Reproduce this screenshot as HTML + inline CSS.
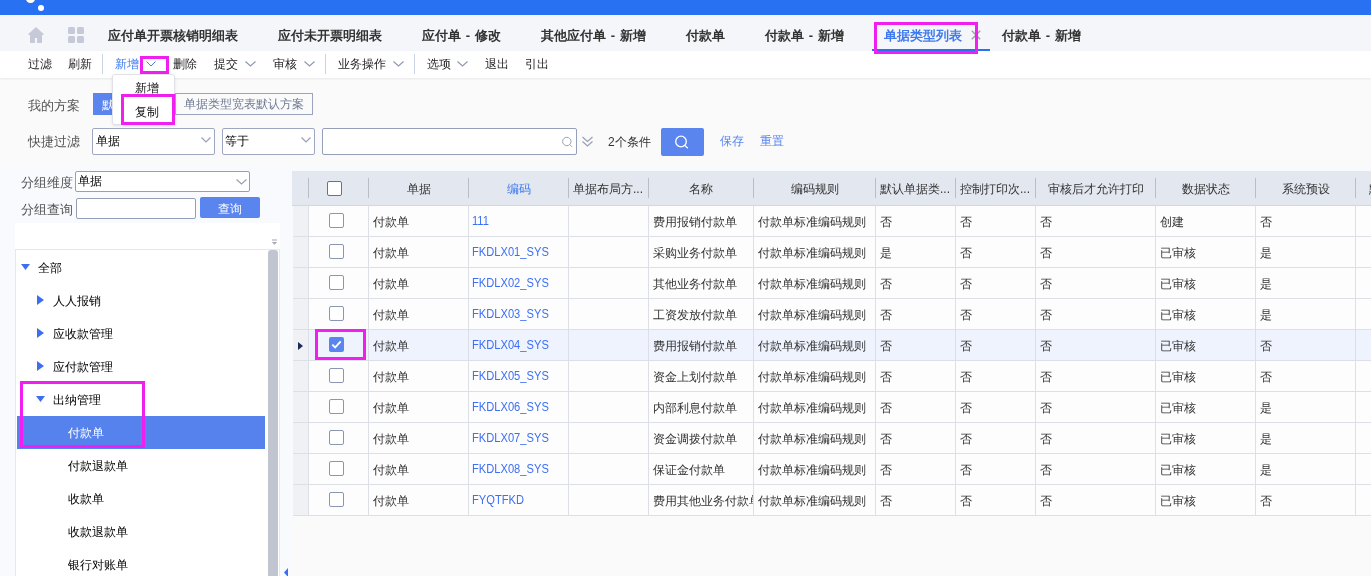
<!DOCTYPE html>
<html><head><meta charset="utf-8">
<style>
*{box-sizing:border-box;margin:0;padding:0}
html,body{width:1371px;height:576px;overflow:hidden;background:#fafafa;font-family:"Liberation Sans",sans-serif;font-size:12px;color:#333}
body{position:relative}
#wrap{position:absolute;left:0;top:0;width:1371px;height:576px;will-change:transform}
.a{position:absolute;white-space:nowrap}
#topbar{left:0;top:0;width:1371px;height:15px;background:#2871f2}
#tabs{left:0;top:15px;width:1371px;height:36px;background:#f5f6fa}
.tab{position:absolute;top:13px;font-size:13px;font-weight:bold;color:#333;line-height:16px;white-space:nowrap}
#toolbar{left:0;top:51px;width:1371px;height:27px;background:#fff;box-shadow:0 1px 2px rgba(0,0,0,0.08)}
.tb{position:absolute;top:5px;font-size:12.4px;color:#1f1f1f;line-height:16px;white-space:nowrap}
.sep{position:absolute;top:3px;width:1px;height:20px;background:#cbd2e6}
.chev{position:absolute;top:10px}
.mag{position:absolute;border:3px solid #f01ff0}
.hd{top:181px;line-height:16px;color:#333}
.cell{line-height:30px;padding-top:1px;color:#333}
.lat{font-size:12.6px;padding-top:0 !important;transform:scaleX(0.885);transform-origin:0 0}
.lbl{color:#555;line-height:16px;font-size:12.8px}
.tr{line-height:16px;font-size:12.3px;color:#000;margin-top:1px}
</style></head><body><div id="wrap">
<div class="a" id="topbar"></div>
<div class="a" style="left:26px;top:-6px;width:8.5px;height:8.5px;border-radius:50%;background:#fff"></div>
<div class="a" style="left:37.8px;top:5.1px;width:5.8px;height:5.8px;border-radius:50%;background:#fff"></div>

<div class="a" id="tabs">
 <svg style="position:absolute;left:28px;top:12px" width="16" height="16" viewBox="0 0 16 16"><path d="M8 0 L15.6 7 Q16 8 15 8 L14 8 L14 16 L9.1 16 L9.1 11 L6.9 11 L6.9 16 L2 16 L2 8 L1 8 Q0 8 0.4 7 Z" fill="#c5c9d8"/></svg>
 <svg style="position:absolute;left:68px;top:12px" width="16" height="16" viewBox="0 0 16 16"><rect x="0" y="0" width="7" height="7" rx="1.5" fill="#c5c9d8"/><rect x="9" y="0" width="7" height="7" rx="1.5" fill="#c5c9d8"/><rect x="0" y="9" width="7" height="7" rx="1.5" fill="#c5c9d8"/><rect x="9" y="9" width="7" height="7" rx="1.5" fill="#c5c9d8"/></svg>
 <div class="tab" style="left:108px">应付单开票核销明细表</div>
 <div class="tab" style="left:278px">应付未开票明细表</div>
 <div class="tab" style="left:422px">应付单<span style="padding:0 1.2px"> - </span>修改</div>
 <div class="tab" style="left:541px">其他应付单<span style="padding:0 1.2px"> - </span>新增</div>
 <div class="tab" style="left:686px">付款单</div>
 <div class="tab" style="left:765px">付款单<span style="padding:0 1.2px"> - </span>新增</div>
 <div class="tab" style="left:884px;color:#3f7af0">单据类型列表</div>
 <svg style="position:absolute;left:971px;top:15px" width="10" height="10" viewBox="0 0 10 10"><path d="M0.8 0.8 L9.2 9.2 M9.2 0.8 L0.8 9.2" stroke="#9aa0ad" stroke-width="1.4"/></svg>
 <div style="position:absolute;left:872px;top:34px;width:118px;height:2px;background:#2871f2"></div>
 <div class="tab" style="left:1002px">付款单<span style="padding:0 1.2px"> - </span>新增</div>
</div>

<div class="a" id="toolbar">
 <div class="tb" style="left:28px">过滤</div>
 <div class="tb" style="left:68px">刷新</div>
 <div class="sep" style="left:102px"></div>
 <div class="tb" style="left:115px;color:#3f7af0">新增</div>
 <svg class="chev" style="left:146px" width="10" height="6" viewBox="0 0 10 6"><path d="M0.5 0.5 L5 5 L9.5 0.5" stroke="#3f7af0" fill="none" stroke-width="1"/></svg>
 <div class="tb" style="left:173px">删除</div>
 <div class="tb" style="left:214px">提交</div>
 <svg class="chev" style="left:245px" width="11" height="6" viewBox="0 0 11 6"><path d="M0.5 0.5 L5.5 5 L10.5 0.5" stroke="#8d97b3" fill="none" stroke-width="1.1"/></svg>
 <div class="tb" style="left:273px">审核</div>
 <svg class="chev" style="left:304px" width="11" height="6" viewBox="0 0 11 6"><path d="M0.5 0.5 L5.5 5 L10.5 0.5" stroke="#8d97b3" fill="none" stroke-width="1.1"/></svg>
 <div class="sep" style="left:325px"></div>
 <div class="tb" style="left:338px">业务操作</div>
 <svg class="chev" style="left:393px" width="11" height="6" viewBox="0 0 11 6"><path d="M0.5 0.5 L5.5 5 L10.5 0.5" stroke="#8d97b3" fill="none" stroke-width="1.1"/></svg>
 <div class="sep" style="left:414px"></div>
 <div class="tb" style="left:427px">选项</div>
 <svg class="chev" style="left:457px" width="11" height="6" viewBox="0 0 11 6"><path d="M0.5 0.5 L5.5 5 L10.5 0.5" stroke="#8d97b3" fill="none" stroke-width="1.1"/></svg>
 <div class="tb" style="left:485px">退出</div>
 <div class="tb" style="left:525px">引出</div>
</div>

<!-- filter area -->
<div class="a lbl" style="left:28px;top:98px">我的方案</div>
<div class="a" style="left:93px;top:93px;width:40px;height:22px;background:#5a84ee"></div>
<div class="a" style="left:102px;top:97px;color:#fff;line-height:16px">默认</div>
<div class="a" style="left:175px;top:93px;width:138px;height:22px;border:1px solid #9aa4be"></div>
<div class="a" style="left:184px;top:96px;color:#6d7892;line-height:16px">单据类型宽表默认方案</div>

<div class="a lbl" style="left:28px;top:134px">快捷过滤</div>
<div class="a" style="left:92px;top:128px;width:123px;height:27px;border:1px solid #9ea7bf;border-radius:2px;background:#fff"></div>
<div class="a" style="left:96px;top:133px;color:#000;line-height:16px">单据</div>
<svg class="a" style="left:201px;top:137px" width="10" height="6" viewBox="0 0 10 6"><path d="M0.5 0.5 L5 5 L9.5 0.5" stroke="#98a0b4" fill="none" stroke-width="1.2"/></svg>
<div class="a" style="left:222px;top:128px;width:93px;height:27px;border:1px solid #9ea7bf;border-radius:2px;background:#fff"></div>
<div class="a" style="left:225px;top:133px;color:#000;line-height:16px">等于</div>
<svg class="a" style="left:301px;top:137px" width="10" height="6" viewBox="0 0 10 6"><path d="M0.5 0.5 L5 5 L9.5 0.5" stroke="#98a0b4" fill="none" stroke-width="1.2"/></svg>
<div class="a" style="left:322px;top:128px;width:255px;height:27px;border:1px solid #969fb8;border-radius:2px;background:#fff"></div>
<svg class="a" style="left:561px;top:136px" width="13" height="12" viewBox="0 0 13 12"><circle cx="5.8" cy="5.5" r="4.2" stroke="#9ba2b3" fill="none" stroke-width="1"/><path d="M8.9 8.6 L11 10.8" stroke="#9ba2b3" stroke-width="1"/></svg>
<svg class="a" style="left:582px;top:136px" width="11" height="11" viewBox="0 0 11 11"><path d="M0.5 1 L5.5 5.5 L10.5 1 M0.5 5.5 L5.5 10 L10.5 5.5" stroke="#98a0b4" fill="none" stroke-width="1.2"/></svg>
<div class="a" style="left:608px;top:134px;color:#333;line-height:16px">2个条件</div>
<div class="a" style="left:661px;top:128px;width:43px;height:28px;background:#5a84ee;border-radius:2px"></div>
<svg class="a" style="left:674px;top:135px" width="16" height="15" viewBox="0 0 16 15"><circle cx="7" cy="6.5" r="5.3" stroke="#fff" fill="none" stroke-width="1.3"/><path d="M10.8 10.4 L13.8 13.3" stroke="#fff" stroke-width="1.3"/></svg>
<div class="a" style="left:720px;top:133px;color:#5a84ee;line-height:16px">保存</div>
<div class="a" style="left:760px;top:133px;color:#5a84ee;line-height:16px">重置</div>

<!-- left panel -->
<div class="a" style="left:0;top:166px;width:1371px;height:410px;background:#f9fafe"></div>
<div class="a" style="left:292px;top:171px;width:1079px;height:405px;background:#fafafa"></div>
<div class="a lbl" style="left:21px;top:175px">分组维度</div>
<div class="a" style="left:75px;top:171px;width:175px;height:21px;border:1px solid #969fb8;border-radius:2px;background:#fff"></div>
<div class="a" style="left:78px;top:173px;color:#000;line-height:16px">单据</div>
<svg class="a" style="left:236px;top:179px" width="11" height="6" viewBox="0 0 11 6"><path d="M0.5 0.5 L5.5 5 L10.5 0.5" stroke="#98a0b4" fill="none" stroke-width="1.2"/></svg>
<div class="a lbl" style="left:21px;top:202px">分组查询</div>
<div class="a" style="left:76px;top:198px;width:120px;height:21px;border:1px solid #969fb8;border-radius:2px;background:#fff"></div>
<div class="a" style="left:200px;top:197px;width:60px;height:21px;background:#5a84ee;border-radius:2px"></div>
<div class="a" style="left:218px;top:201px;color:#fff;line-height:16px">查询</div>

<div class="a" style="left:15px;top:223px;width:265px;height:360px;background:#fff"></div>
<svg class="a" style="left:271px;top:239px" width="7" height="6" viewBox="0 0 7 6"><path d="M1 1 H6" stroke="#a0a3ab" stroke-width="1"/><path d="M0.8 3 H6.2 L3.5 5.8 Z" fill="#a8abb3"/></svg>
<div class="a" style="left:15px;top:249px;width:265px;height:330px;border-top:1px solid #e6e8ee;border-left:1px solid #e6e8ee;border-right:1px solid #e6e8ee"></div>
<div class="a" style="left:268px;top:250px;width:10px;height:330px;background:#c1c5d0;border-radius:3px 3px 0 0"></div>
<div class="a" style="left:17px;top:416px;width:248px;height:33px;background:#5682ee"></div>

<div class="a" style="left:292px;top:171px;width:1079px;height:35px;background:#e3e7ef;border-bottom:1px solid #d3d7e0"></div>
<div class="a" style="left:308px;top:178px;width:1px;height:20px;background:#b9bdc8"></div>
<div class="a" style="left:368px;top:178px;width:1px;height:20px;background:#b9bdc8"></div>
<div class="a" style="left:468px;top:178px;width:1px;height:20px;background:#b9bdc8"></div>
<div class="a" style="left:568px;top:178px;width:1px;height:20px;background:#b9bdc8"></div>
<div class="a" style="left:648px;top:178px;width:1px;height:20px;background:#b9bdc8"></div>
<div class="a" style="left:753px;top:178px;width:1px;height:20px;background:#b9bdc8"></div>
<div class="a" style="left:875px;top:178px;width:1px;height:20px;background:#b9bdc8"></div>
<div class="a" style="left:955px;top:178px;width:1px;height:20px;background:#b9bdc8"></div>
<div class="a" style="left:1035px;top:178px;width:1px;height:20px;background:#b9bdc8"></div>
<div class="a" style="left:1155px;top:178px;width:1px;height:20px;background:#b9bdc8"></div>
<div class="a" style="left:1255px;top:178px;width:1px;height:20px;background:#b9bdc8"></div>
<div class="a" style="left:1355px;top:178px;width:1px;height:20px;background:#b9bdc8"></div>
<div class="a" style="left:327px;top:181px;width:15px;height:15px;border:1px solid #6f727a;border-radius:2px;background:#fff"></div>
<div class="a hd" style="left:369px;width:99px;text-align:center;">单据</div>
<div class="a hd" style="left:469px;width:99px;text-align:center;color:#3f7af0;">编码</div>
<div class="a hd" style="left:573px;">单据布局方...</div>
<div class="a hd" style="left:649px;width:104px;text-align:center;">名称</div>
<div class="a hd" style="left:754px;width:121px;text-align:center;">编码规则</div>
<div class="a hd" style="left:880px;">默认单据类...</div>
<div class="a hd" style="left:960px;">控制打印次...</div>
<div class="a hd" style="left:1036px;width:119px;text-align:center;">审核后才允许打印</div>
<div class="a hd" style="left:1156px;width:99px;text-align:center;">数据状态</div>
<div class="a hd" style="left:1256px;width:99px;text-align:center;">系统预设</div>
<div class="a hd" style="left:1369px">默</div>
<div class="a" style="left:293px;top:206px;width:1078px;height:31px;background:#fdfdfe;border-bottom:1px solid #dcdfe6"></div>
<div class="a" style="left:293px;top:206px;width:15px;height:30px;background:#f0f1f5"></div>
<div class="a" style="left:308px;top:206px;width:1px;height:30px;background:#dcdfe6"></div>
<div class="a" style="left:368px;top:206px;width:1px;height:30px;background:#dcdfe6"></div>
<div class="a" style="left:468px;top:206px;width:1px;height:30px;background:#dcdfe6"></div>
<div class="a" style="left:568px;top:206px;width:1px;height:30px;background:#dcdfe6"></div>
<div class="a" style="left:648px;top:206px;width:1px;height:30px;background:#dcdfe6"></div>
<div class="a" style="left:753px;top:206px;width:1px;height:30px;background:#dcdfe6"></div>
<div class="a" style="left:875px;top:206px;width:1px;height:30px;background:#dcdfe6"></div>
<div class="a" style="left:955px;top:206px;width:1px;height:30px;background:#dcdfe6"></div>
<div class="a" style="left:1035px;top:206px;width:1px;height:30px;background:#dcdfe6"></div>
<div class="a" style="left:1155px;top:206px;width:1px;height:30px;background:#dcdfe6"></div>
<div class="a" style="left:1255px;top:206px;width:1px;height:30px;background:#dcdfe6"></div>
<div class="a" style="left:1355px;top:206px;width:1px;height:30px;background:#dcdfe6"></div>
<div class="a" style="left:329px;top:213px;width:15px;height:15px;border:1px solid #8c96b2;border-radius:2px;background:#fff"></div>
<div class="a cell" style="left:373px;top:206px;">付款单</div>
<div class="a cell lat" style="left:472px;top:206px;color:#3b6ff5;">111</div>
<div class="a cell" style="left:653px;top:206px;width:100px;overflow:hidden;">费用报销付款单</div>
<div class="a cell" style="left:758px;top:206px;">付款单标准编码规则</div>
<div class="a cell" style="left:880px;top:206px;">否</div>
<div class="a cell" style="left:960px;top:206px;">否</div>
<div class="a cell" style="left:1040px;top:206px;">否</div>
<div class="a cell" style="left:1160px;top:206px;">创建</div>
<div class="a cell" style="left:1260px;top:206px;">否</div>
<div class="a" style="left:293px;top:237px;width:1078px;height:31px;background:#fdfdfe;border-bottom:1px solid #dcdfe6"></div>
<div class="a" style="left:293px;top:237px;width:15px;height:30px;background:#f0f1f5"></div>
<div class="a" style="left:308px;top:237px;width:1px;height:30px;background:#dcdfe6"></div>
<div class="a" style="left:368px;top:237px;width:1px;height:30px;background:#dcdfe6"></div>
<div class="a" style="left:468px;top:237px;width:1px;height:30px;background:#dcdfe6"></div>
<div class="a" style="left:568px;top:237px;width:1px;height:30px;background:#dcdfe6"></div>
<div class="a" style="left:648px;top:237px;width:1px;height:30px;background:#dcdfe6"></div>
<div class="a" style="left:753px;top:237px;width:1px;height:30px;background:#dcdfe6"></div>
<div class="a" style="left:875px;top:237px;width:1px;height:30px;background:#dcdfe6"></div>
<div class="a" style="left:955px;top:237px;width:1px;height:30px;background:#dcdfe6"></div>
<div class="a" style="left:1035px;top:237px;width:1px;height:30px;background:#dcdfe6"></div>
<div class="a" style="left:1155px;top:237px;width:1px;height:30px;background:#dcdfe6"></div>
<div class="a" style="left:1255px;top:237px;width:1px;height:30px;background:#dcdfe6"></div>
<div class="a" style="left:1355px;top:237px;width:1px;height:30px;background:#dcdfe6"></div>
<div class="a" style="left:329px;top:244px;width:15px;height:15px;border:1px solid #8c96b2;border-radius:2px;background:#fff"></div>
<div class="a cell" style="left:373px;top:237px;">付款单</div>
<div class="a cell lat" style="left:472px;top:237px;color:#3b6ff5;">FKDLX01_SYS</div>
<div class="a cell" style="left:653px;top:237px;width:100px;overflow:hidden;">采购业务付款单</div>
<div class="a cell" style="left:758px;top:237px;">付款单标准编码规则</div>
<div class="a cell" style="left:880px;top:237px;">是</div>
<div class="a cell" style="left:960px;top:237px;">否</div>
<div class="a cell" style="left:1040px;top:237px;">否</div>
<div class="a cell" style="left:1160px;top:237px;">已审核</div>
<div class="a cell" style="left:1260px;top:237px;">是</div>
<div class="a" style="left:293px;top:268px;width:1078px;height:31px;background:#fdfdfe;border-bottom:1px solid #dcdfe6"></div>
<div class="a" style="left:293px;top:268px;width:15px;height:30px;background:#f0f1f5"></div>
<div class="a" style="left:308px;top:268px;width:1px;height:30px;background:#dcdfe6"></div>
<div class="a" style="left:368px;top:268px;width:1px;height:30px;background:#dcdfe6"></div>
<div class="a" style="left:468px;top:268px;width:1px;height:30px;background:#dcdfe6"></div>
<div class="a" style="left:568px;top:268px;width:1px;height:30px;background:#dcdfe6"></div>
<div class="a" style="left:648px;top:268px;width:1px;height:30px;background:#dcdfe6"></div>
<div class="a" style="left:753px;top:268px;width:1px;height:30px;background:#dcdfe6"></div>
<div class="a" style="left:875px;top:268px;width:1px;height:30px;background:#dcdfe6"></div>
<div class="a" style="left:955px;top:268px;width:1px;height:30px;background:#dcdfe6"></div>
<div class="a" style="left:1035px;top:268px;width:1px;height:30px;background:#dcdfe6"></div>
<div class="a" style="left:1155px;top:268px;width:1px;height:30px;background:#dcdfe6"></div>
<div class="a" style="left:1255px;top:268px;width:1px;height:30px;background:#dcdfe6"></div>
<div class="a" style="left:1355px;top:268px;width:1px;height:30px;background:#dcdfe6"></div>
<div class="a" style="left:329px;top:275px;width:15px;height:15px;border:1px solid #8c96b2;border-radius:2px;background:#fff"></div>
<div class="a cell" style="left:373px;top:268px;">付款单</div>
<div class="a cell lat" style="left:472px;top:268px;color:#3b6ff5;">FKDLX02_SYS</div>
<div class="a cell" style="left:653px;top:268px;width:100px;overflow:hidden;">其他业务付款单</div>
<div class="a cell" style="left:758px;top:268px;">付款单标准编码规则</div>
<div class="a cell" style="left:880px;top:268px;">否</div>
<div class="a cell" style="left:960px;top:268px;">否</div>
<div class="a cell" style="left:1040px;top:268px;">否</div>
<div class="a cell" style="left:1160px;top:268px;">已审核</div>
<div class="a cell" style="left:1260px;top:268px;">是</div>
<div class="a" style="left:293px;top:299px;width:1078px;height:31px;background:#fdfdfe;border-bottom:1px solid #dcdfe6"></div>
<div class="a" style="left:293px;top:299px;width:15px;height:30px;background:#f0f1f5"></div>
<div class="a" style="left:308px;top:299px;width:1px;height:30px;background:#dcdfe6"></div>
<div class="a" style="left:368px;top:299px;width:1px;height:30px;background:#dcdfe6"></div>
<div class="a" style="left:468px;top:299px;width:1px;height:30px;background:#dcdfe6"></div>
<div class="a" style="left:568px;top:299px;width:1px;height:30px;background:#dcdfe6"></div>
<div class="a" style="left:648px;top:299px;width:1px;height:30px;background:#dcdfe6"></div>
<div class="a" style="left:753px;top:299px;width:1px;height:30px;background:#dcdfe6"></div>
<div class="a" style="left:875px;top:299px;width:1px;height:30px;background:#dcdfe6"></div>
<div class="a" style="left:955px;top:299px;width:1px;height:30px;background:#dcdfe6"></div>
<div class="a" style="left:1035px;top:299px;width:1px;height:30px;background:#dcdfe6"></div>
<div class="a" style="left:1155px;top:299px;width:1px;height:30px;background:#dcdfe6"></div>
<div class="a" style="left:1255px;top:299px;width:1px;height:30px;background:#dcdfe6"></div>
<div class="a" style="left:1355px;top:299px;width:1px;height:30px;background:#dcdfe6"></div>
<div class="a" style="left:329px;top:306px;width:15px;height:15px;border:1px solid #8c96b2;border-radius:2px;background:#fff"></div>
<div class="a cell" style="left:373px;top:299px;">付款单</div>
<div class="a cell lat" style="left:472px;top:299px;color:#3b6ff5;">FKDLX03_SYS</div>
<div class="a cell" style="left:653px;top:299px;width:100px;overflow:hidden;">工资发放付款单</div>
<div class="a cell" style="left:758px;top:299px;">付款单标准编码规则</div>
<div class="a cell" style="left:880px;top:299px;">否</div>
<div class="a cell" style="left:960px;top:299px;">否</div>
<div class="a cell" style="left:1040px;top:299px;">否</div>
<div class="a cell" style="left:1160px;top:299px;">已审核</div>
<div class="a cell" style="left:1260px;top:299px;">是</div>
<div class="a" style="left:293px;top:330px;width:1078px;height:31px;background:#eef3fd;border-bottom:1px solid #dcdfe6"></div>
<div class="a" style="left:293px;top:330px;width:15px;height:30px;background:#f0f1f5"></div>
<div class="a" style="left:308px;top:330px;width:1px;height:30px;background:#dcdfe6"></div>
<div class="a" style="left:368px;top:330px;width:1px;height:30px;background:#dcdfe6"></div>
<div class="a" style="left:468px;top:330px;width:1px;height:30px;background:#dcdfe6"></div>
<div class="a" style="left:568px;top:330px;width:1px;height:30px;background:#dcdfe6"></div>
<div class="a" style="left:648px;top:330px;width:1px;height:30px;background:#dcdfe6"></div>
<div class="a" style="left:753px;top:330px;width:1px;height:30px;background:#dcdfe6"></div>
<div class="a" style="left:875px;top:330px;width:1px;height:30px;background:#dcdfe6"></div>
<div class="a" style="left:955px;top:330px;width:1px;height:30px;background:#dcdfe6"></div>
<div class="a" style="left:1035px;top:330px;width:1px;height:30px;background:#dcdfe6"></div>
<div class="a" style="left:1155px;top:330px;width:1px;height:30px;background:#dcdfe6"></div>
<div class="a" style="left:1255px;top:330px;width:1px;height:30px;background:#dcdfe6"></div>
<div class="a" style="left:1355px;top:330px;width:1px;height:30px;background:#dcdfe6"></div>
<svg class="a" style="left:298px;top:342px" width="6" height="8" viewBox="0 0 6 8"><path d="M0 0 L5 4 L0 8 Z" fill="#1c2a55"/></svg>
<div class="a" style="left:329px;top:337px;width:15px;height:15px;border-radius:2px;background:#5b85ee"></div>
<svg class="a" style="left:329px;top:337px" width="15" height="15" viewBox="0 0 15 15"><path d="M3.3 7.6 L6.2 10.4 L11.7 4.4" stroke="#fff" stroke-width="1.9" fill="none"/></svg>
<div class="a cell" style="left:373px;top:330px;">付款单</div>
<div class="a cell lat" style="left:472px;top:330px;color:#3b6ff5;">FKDLX04_SYS</div>
<div class="a cell" style="left:653px;top:330px;width:100px;overflow:hidden;">费用报销付款单</div>
<div class="a cell" style="left:758px;top:330px;">付款单标准编码规则</div>
<div class="a cell" style="left:880px;top:330px;">否</div>
<div class="a cell" style="left:960px;top:330px;">否</div>
<div class="a cell" style="left:1040px;top:330px;">否</div>
<div class="a cell" style="left:1160px;top:330px;">已审核</div>
<div class="a cell" style="left:1260px;top:330px;">否</div>
<div class="a" style="left:293px;top:361px;width:1078px;height:31px;background:#fdfdfe;border-bottom:1px solid #dcdfe6"></div>
<div class="a" style="left:293px;top:361px;width:15px;height:30px;background:#f0f1f5"></div>
<div class="a" style="left:308px;top:361px;width:1px;height:30px;background:#dcdfe6"></div>
<div class="a" style="left:368px;top:361px;width:1px;height:30px;background:#dcdfe6"></div>
<div class="a" style="left:468px;top:361px;width:1px;height:30px;background:#dcdfe6"></div>
<div class="a" style="left:568px;top:361px;width:1px;height:30px;background:#dcdfe6"></div>
<div class="a" style="left:648px;top:361px;width:1px;height:30px;background:#dcdfe6"></div>
<div class="a" style="left:753px;top:361px;width:1px;height:30px;background:#dcdfe6"></div>
<div class="a" style="left:875px;top:361px;width:1px;height:30px;background:#dcdfe6"></div>
<div class="a" style="left:955px;top:361px;width:1px;height:30px;background:#dcdfe6"></div>
<div class="a" style="left:1035px;top:361px;width:1px;height:30px;background:#dcdfe6"></div>
<div class="a" style="left:1155px;top:361px;width:1px;height:30px;background:#dcdfe6"></div>
<div class="a" style="left:1255px;top:361px;width:1px;height:30px;background:#dcdfe6"></div>
<div class="a" style="left:1355px;top:361px;width:1px;height:30px;background:#dcdfe6"></div>
<div class="a" style="left:329px;top:368px;width:15px;height:15px;border:1px solid #8c96b2;border-radius:2px;background:#fff"></div>
<div class="a cell" style="left:373px;top:361px;">付款单</div>
<div class="a cell lat" style="left:472px;top:361px;color:#3b6ff5;">FKDLX05_SYS</div>
<div class="a cell" style="left:653px;top:361px;width:100px;overflow:hidden;">资金上划付款单</div>
<div class="a cell" style="left:758px;top:361px;">付款单标准编码规则</div>
<div class="a cell" style="left:880px;top:361px;">否</div>
<div class="a cell" style="left:960px;top:361px;">否</div>
<div class="a cell" style="left:1040px;top:361px;">否</div>
<div class="a cell" style="left:1160px;top:361px;">已审核</div>
<div class="a cell" style="left:1260px;top:361px;">否</div>
<div class="a" style="left:293px;top:392px;width:1078px;height:31px;background:#fdfdfe;border-bottom:1px solid #dcdfe6"></div>
<div class="a" style="left:293px;top:392px;width:15px;height:30px;background:#f0f1f5"></div>
<div class="a" style="left:308px;top:392px;width:1px;height:30px;background:#dcdfe6"></div>
<div class="a" style="left:368px;top:392px;width:1px;height:30px;background:#dcdfe6"></div>
<div class="a" style="left:468px;top:392px;width:1px;height:30px;background:#dcdfe6"></div>
<div class="a" style="left:568px;top:392px;width:1px;height:30px;background:#dcdfe6"></div>
<div class="a" style="left:648px;top:392px;width:1px;height:30px;background:#dcdfe6"></div>
<div class="a" style="left:753px;top:392px;width:1px;height:30px;background:#dcdfe6"></div>
<div class="a" style="left:875px;top:392px;width:1px;height:30px;background:#dcdfe6"></div>
<div class="a" style="left:955px;top:392px;width:1px;height:30px;background:#dcdfe6"></div>
<div class="a" style="left:1035px;top:392px;width:1px;height:30px;background:#dcdfe6"></div>
<div class="a" style="left:1155px;top:392px;width:1px;height:30px;background:#dcdfe6"></div>
<div class="a" style="left:1255px;top:392px;width:1px;height:30px;background:#dcdfe6"></div>
<div class="a" style="left:1355px;top:392px;width:1px;height:30px;background:#dcdfe6"></div>
<div class="a" style="left:329px;top:399px;width:15px;height:15px;border:1px solid #8c96b2;border-radius:2px;background:#fff"></div>
<div class="a cell" style="left:373px;top:392px;">付款单</div>
<div class="a cell lat" style="left:472px;top:392px;color:#3b6ff5;">FKDLX06_SYS</div>
<div class="a cell" style="left:653px;top:392px;width:100px;overflow:hidden;">内部利息付款单</div>
<div class="a cell" style="left:758px;top:392px;">付款单标准编码规则</div>
<div class="a cell" style="left:880px;top:392px;">否</div>
<div class="a cell" style="left:960px;top:392px;">否</div>
<div class="a cell" style="left:1040px;top:392px;">否</div>
<div class="a cell" style="left:1160px;top:392px;">已审核</div>
<div class="a cell" style="left:1260px;top:392px;">是</div>
<div class="a" style="left:293px;top:423px;width:1078px;height:31px;background:#fdfdfe;border-bottom:1px solid #dcdfe6"></div>
<div class="a" style="left:293px;top:423px;width:15px;height:30px;background:#f0f1f5"></div>
<div class="a" style="left:308px;top:423px;width:1px;height:30px;background:#dcdfe6"></div>
<div class="a" style="left:368px;top:423px;width:1px;height:30px;background:#dcdfe6"></div>
<div class="a" style="left:468px;top:423px;width:1px;height:30px;background:#dcdfe6"></div>
<div class="a" style="left:568px;top:423px;width:1px;height:30px;background:#dcdfe6"></div>
<div class="a" style="left:648px;top:423px;width:1px;height:30px;background:#dcdfe6"></div>
<div class="a" style="left:753px;top:423px;width:1px;height:30px;background:#dcdfe6"></div>
<div class="a" style="left:875px;top:423px;width:1px;height:30px;background:#dcdfe6"></div>
<div class="a" style="left:955px;top:423px;width:1px;height:30px;background:#dcdfe6"></div>
<div class="a" style="left:1035px;top:423px;width:1px;height:30px;background:#dcdfe6"></div>
<div class="a" style="left:1155px;top:423px;width:1px;height:30px;background:#dcdfe6"></div>
<div class="a" style="left:1255px;top:423px;width:1px;height:30px;background:#dcdfe6"></div>
<div class="a" style="left:1355px;top:423px;width:1px;height:30px;background:#dcdfe6"></div>
<div class="a" style="left:329px;top:430px;width:15px;height:15px;border:1px solid #8c96b2;border-radius:2px;background:#fff"></div>
<div class="a cell" style="left:373px;top:423px;">付款单</div>
<div class="a cell lat" style="left:472px;top:423px;color:#3b6ff5;">FKDLX07_SYS</div>
<div class="a cell" style="left:653px;top:423px;width:100px;overflow:hidden;">资金调拨付款单</div>
<div class="a cell" style="left:758px;top:423px;">付款单标准编码规则</div>
<div class="a cell" style="left:880px;top:423px;">否</div>
<div class="a cell" style="left:960px;top:423px;">否</div>
<div class="a cell" style="left:1040px;top:423px;">否</div>
<div class="a cell" style="left:1160px;top:423px;">已审核</div>
<div class="a cell" style="left:1260px;top:423px;">是</div>
<div class="a" style="left:293px;top:454px;width:1078px;height:31px;background:#fdfdfe;border-bottom:1px solid #dcdfe6"></div>
<div class="a" style="left:293px;top:454px;width:15px;height:30px;background:#f0f1f5"></div>
<div class="a" style="left:308px;top:454px;width:1px;height:30px;background:#dcdfe6"></div>
<div class="a" style="left:368px;top:454px;width:1px;height:30px;background:#dcdfe6"></div>
<div class="a" style="left:468px;top:454px;width:1px;height:30px;background:#dcdfe6"></div>
<div class="a" style="left:568px;top:454px;width:1px;height:30px;background:#dcdfe6"></div>
<div class="a" style="left:648px;top:454px;width:1px;height:30px;background:#dcdfe6"></div>
<div class="a" style="left:753px;top:454px;width:1px;height:30px;background:#dcdfe6"></div>
<div class="a" style="left:875px;top:454px;width:1px;height:30px;background:#dcdfe6"></div>
<div class="a" style="left:955px;top:454px;width:1px;height:30px;background:#dcdfe6"></div>
<div class="a" style="left:1035px;top:454px;width:1px;height:30px;background:#dcdfe6"></div>
<div class="a" style="left:1155px;top:454px;width:1px;height:30px;background:#dcdfe6"></div>
<div class="a" style="left:1255px;top:454px;width:1px;height:30px;background:#dcdfe6"></div>
<div class="a" style="left:1355px;top:454px;width:1px;height:30px;background:#dcdfe6"></div>
<div class="a" style="left:329px;top:461px;width:15px;height:15px;border:1px solid #8c96b2;border-radius:2px;background:#fff"></div>
<div class="a cell" style="left:373px;top:454px;">付款单</div>
<div class="a cell lat" style="left:472px;top:454px;color:#3b6ff5;">FKDLX08_SYS</div>
<div class="a cell" style="left:653px;top:454px;width:100px;overflow:hidden;">保证金付款单</div>
<div class="a cell" style="left:758px;top:454px;">付款单标准编码规则</div>
<div class="a cell" style="left:880px;top:454px;">否</div>
<div class="a cell" style="left:960px;top:454px;">否</div>
<div class="a cell" style="left:1040px;top:454px;">否</div>
<div class="a cell" style="left:1160px;top:454px;">已审核</div>
<div class="a cell" style="left:1260px;top:454px;">是</div>
<div class="a" style="left:293px;top:485px;width:1078px;height:31px;background:#fdfdfe;border-bottom:1px solid #dcdfe6"></div>
<div class="a" style="left:293px;top:485px;width:15px;height:30px;background:#f0f1f5"></div>
<div class="a" style="left:308px;top:485px;width:1px;height:30px;background:#dcdfe6"></div>
<div class="a" style="left:368px;top:485px;width:1px;height:30px;background:#dcdfe6"></div>
<div class="a" style="left:468px;top:485px;width:1px;height:30px;background:#dcdfe6"></div>
<div class="a" style="left:568px;top:485px;width:1px;height:30px;background:#dcdfe6"></div>
<div class="a" style="left:648px;top:485px;width:1px;height:30px;background:#dcdfe6"></div>
<div class="a" style="left:753px;top:485px;width:1px;height:30px;background:#dcdfe6"></div>
<div class="a" style="left:875px;top:485px;width:1px;height:30px;background:#dcdfe6"></div>
<div class="a" style="left:955px;top:485px;width:1px;height:30px;background:#dcdfe6"></div>
<div class="a" style="left:1035px;top:485px;width:1px;height:30px;background:#dcdfe6"></div>
<div class="a" style="left:1155px;top:485px;width:1px;height:30px;background:#dcdfe6"></div>
<div class="a" style="left:1255px;top:485px;width:1px;height:30px;background:#dcdfe6"></div>
<div class="a" style="left:1355px;top:485px;width:1px;height:30px;background:#dcdfe6"></div>
<div class="a" style="left:329px;top:492px;width:15px;height:15px;border:1px solid #8c96b2;border-radius:2px;background:#fff"></div>
<div class="a cell" style="left:373px;top:485px;">付款单</div>
<div class="a cell lat" style="left:472px;top:485px;color:#3b6ff5;">FYQTFKD</div>
<div class="a cell" style="left:653px;top:485px;width:100px;overflow:hidden;">费用其他业务付款单</div>
<div class="a cell" style="left:758px;top:485px;">付款单标准编码规则</div>
<div class="a cell" style="left:880px;top:485px;">否</div>
<div class="a cell" style="left:960px;top:485px;">否</div>
<div class="a cell" style="left:1040px;top:485px;">否</div>
<div class="a cell" style="left:1160px;top:485px;">已审核</div>
<div class="a cell" style="left:1260px;top:485px;">否</div>
<!-- tree items -->
<svg class="a" style="left:21px;top:264px" width="9" height="6" viewBox="0 0 9 6"><path d="M0 0 H9 L4.5 6 Z" fill="#3d6ef0"/></svg>
<div class="a tr" style="left:38px;top:259px">全部</div>
<svg class="a" style="left:37px;top:295px" width="7" height="10" viewBox="0 0 7 10"><path d="M0 0 L7 5 L0 10 Z" fill="#3d6ef0"/></svg>
<div class="a tr" style="left:53px;top:292px">人人报销</div>
<svg class="a" style="left:37px;top:328px" width="7" height="10" viewBox="0 0 7 10"><path d="M0 0 L7 5 L0 10 Z" fill="#3d6ef0"/></svg>
<div class="a tr" style="left:53px;top:325px">应收款管理</div>
<svg class="a" style="left:37px;top:361px" width="7" height="10" viewBox="0 0 7 10"><path d="M0 0 L7 5 L0 10 Z" fill="#3d6ef0"/></svg>
<div class="a tr" style="left:53px;top:358px">应付款管理</div>
<svg class="a" style="left:36px;top:396px" width="9" height="6" viewBox="0 0 9 6"><path d="M0 0 H9 L4.5 6 Z" fill="#3d6ef0"/></svg>
<div class="a tr" style="left:53px;top:391px">出纳管理</div>
<div class="a tr" style="left:68px;top:424px;color:#fff">付款单</div>
<div class="a tr" style="left:68px;top:457px">付款退款单</div>
<div class="a tr" style="left:68px;top:490px">收款单</div>
<div class="a tr" style="left:68px;top:523px">收款退款单</div>
<div class="a tr" style="left:68px;top:556px">银行对账单</div>

<svg class="a" style="left:284px;top:568px" width="4" height="10" viewBox="0 0 4 10"><path d="M4 0 L0 4.5 L4 9 Z" fill="#3d6ef0"/></svg>

<!-- dropdown menu -->
<div class="a" style="left:112px;top:74px;width:63px;height:51px;background:#fff;border:1px solid #e0e2e8;border-radius:3px;box-shadow:0 1px 3px rgba(0,0,0,0.1)"></div>
<div class="a" style="left:135px;top:80px;color:#111;line-height:16px">新增</div>
<div class="a" style="left:135px;top:104px;color:#111;line-height:16px">复制</div>

<!-- magenta annotations -->
<div class="mag" style="left:874px;top:22px;width:104px;height:32px"></div>
<div class="mag" style="left:140px;top:56px;width:29px;height:18px"></div>
<div class="mag" style="left:121px;top:94px;width:54px;height:31px"></div>
<div class="mag" style="left:315px;top:329px;width:51px;height:31px"></div>
<div class="mag" style="left:20px;top:381px;width:125px;height:67px"></div>
</div></body></html>
